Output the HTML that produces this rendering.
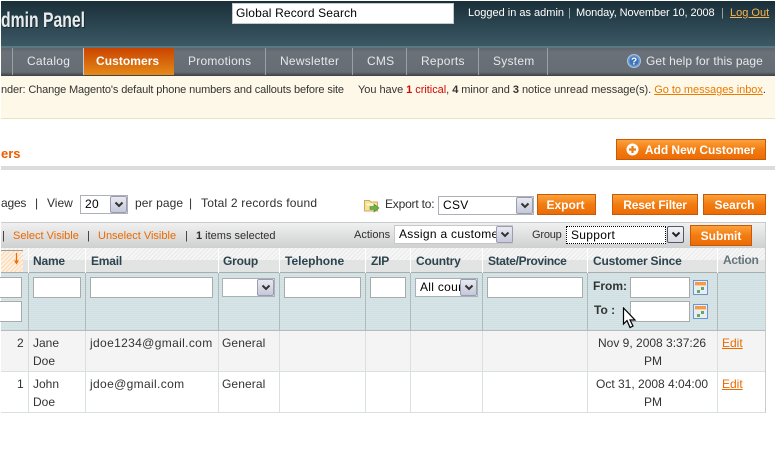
<!DOCTYPE html>
<html><head><meta charset="utf-8"><style>
html,body{margin:0;padding:0;background:#fff}
#p{position:relative;width:776px;height:450px;overflow:hidden;font:12px/15px "Liberation Sans",sans-serif;color:#2f2f2f;background:#fff}
#p div,#p span.a,#p a.a,#p svg{position:absolute}
.t{position:absolute;white-space:nowrap}
.nav{position:absolute;top:47px;height:28px;line-height:29px;color:#e6e8ea;white-space:nowrap;letter-spacing:.25px}
.sep{position:absolute;top:48px;width:1px;height:27px;background:#9aa0a5}
.btn{position:absolute;box-sizing:border-box;border:1px solid #c8590b;background:linear-gradient(#fca13a,#f27c12 50%,#ec6c05);color:#fff;font-weight:bold;text-align:center;line-height:20px;white-space:nowrap}
.sel{position:absolute;box-sizing:border-box;border:1px solid #aeb0b8;background:#fff;color:#000;line-height:17px;padding-left:4px;font-size:12px;letter-spacing:.3px;white-space:nowrap;overflow:hidden}
.arr{position:absolute;box-sizing:border-box;border:1px solid #9a9db0;background:linear-gradient(#e8e9f2,#c5c8d8);border-radius:2px}
.arr svg{left:3px;top:4px}
.inp{position:absolute;box-sizing:border-box;border:1px solid #aaa;background:#fff;height:21px}
.th{position:absolute;top:254px;font-weight:bold;color:#2d444f;white-space:nowrap;font-size:12px;letter-spacing:-.2px}
.vl{position:absolute;width:1px}
.c{position:absolute;white-space:nowrap;color:#333;line-height:18px}
a{color:#eb5e00}
</style></head><body><div id="p">
<!-- header -->
<div style="left:1px;top:1px;width:774px;height:45px;background:linear-gradient(#1a2f38,#3b5965)"></div>
<div style="left:1px;top:46px;width:774px;height:2px;background:#5d7880"></div>
<div style="left:1px;top:48px;width:774px;height:28px;background:linear-gradient(#5e656d 0,#6a7178 4px,#666d74 24px,#3a3f44 28px)"></div>
<span class="t" style="left:1px;top:8px;font-size:21px;line-height:26px;font-weight:bold;color:#e9eced;transform:scaleX(.75);transform-origin:0 0;text-shadow:1px 1px 0 #14242b">dmin Panel</span>
<div style="left:232px;top:3px;width:222px;height:21px;box-sizing:border-box;border:1px solid #c6c9cb;background:#fff;color:#000;font-size:12px;letter-spacing:.15px;line-height:19px;padding-left:3px">Global Record Search</div>
<span class="t" style="left:468px;top:6px;color:#fff;font-size:11px">Logged in as admin</span>
<span class="t" style="left:568px;top:6px;color:#9fb0b6;font-size:11px">|</span>
<span class="t" style="left:576px;top:6px;color:#fff;font-size:11px;letter-spacing:-.1px">Monday, November 10, 2008</span>
<span class="t" style="left:721px;top:6px;color:#9fb0b6;font-size:11px">|</span>
<a class="t" href="#" style="left:730px;top:6px;color:#f9b24f;font-size:11px">Log Out</a>
<!-- nav -->
<div class="sep" style="left:12px"></div>
<div class="sep" style="left:83px;background:#c8ccd0"></div>
<div style="left:84px;top:48px;width:90px;height:27px;background:linear-gradient(#c94400,#e58a18)"></div>
<div class="sep" style="left:265px"></div><div class="sep" style="left:352px"></div><div class="sep" style="left:406px"></div><div class="sep" style="left:478px"></div><div class="sep" style="left:547px"></div>
<span class="nav" style="left:27px">Catalog</span>
<span class="nav" style="left:96px;color:#fff;font-weight:bold;letter-spacing:.05px">Customers</span>
<span class="nav" style="left:188px">Promotions</span>
<span class="nav" style="left:280px">Newsletter</span>
<span class="nav" style="left:367px">CMS</span>
<span class="nav" style="left:421px">Reports</span>
<span class="nav" style="left:493px">System</span>
<svg style="left:627px;top:54px" width="14" height="14" viewBox="0 0 14 14"><circle cx="7" cy="7" r="6.5" fill="#6f9bd0" stroke="#a9c4e4"/><circle cx="7" cy="7" r="4.6" fill="#3f74b8"/><text x="7" y="10.5" font-size="10" font-weight="bold" fill="#fff" text-anchor="middle" font-family="Liberation Sans">?</text></svg>
<span class="nav" style="left:646px;letter-spacing:.1px">Get help for this page</span>
<!-- notice -->
<div style="left:1px;top:76px;width:774px;height:42px;background:#fef8e8;border-bottom:1px solid #eee2be"></div>
<span class="t" style="left:1px;top:83px;font-size:11px;color:#333;letter-spacing:-.13px">nder: Change Magento's default phone numbers and callouts before site</span>
<span class="t" style="left:358px;top:83px;font-size:11px;color:#333;letter-spacing:-.04px">You have <b style="color:#d40707">1</b> <span style="color:#d40707">critical</span>, <b>4</b> minor and <b>3</b> notice unread message(s). <a href="#" style="color:#eb7a00">Go to messages inbox</a>.</span>
<!-- title -->
<span class="t" style="left:1px;top:145px;font-size:13px;line-height:17px;font-weight:bold;color:#eb5e00">ers</span>
<div style="left:1px;top:166px;width:774px;height:4px;background:#dcdcdc"></div>
<div class="btn" style="left:616px;top:139px;width:150px;height:21px;padding-left:18px;letter-spacing:-.03px">Add New Customer</div>
<svg style="left:626px;top:143px" width="13" height="13" viewBox="0 0 13 13"><circle cx="6.5" cy="6.5" r="6" fill="#fff"/><path d="M6.5 3v7M3 6.500h7" stroke="#ee7a10" stroke-width="2.200"/></svg>
<!-- pager -->
<span class="t" style="left:1px;top:196px;letter-spacing:-.2px">ages</span>
<span class="t" style="left:35px;top:196px">|</span>
<span class="t" style="left:47px;top:196px">View</span>
<div class="sel" style="left:80px;top:195px;width:48px;height:19px">20</div>
<div class="arr" style="left:110px;top:196px;width:17px;height:17px"><svg width="10" height="8" viewBox="0 0 10 8"><path d="M1.500 1.500L5 5l3.500-3.500" fill="none" stroke="#333" stroke-width="2"/></svg></div>
<span class="t" style="left:135px;top:196px;letter-spacing:.1px">per page</span>
<span class="t" style="left:189px;top:196px">|</span>
<span class="t" style="left:201px;top:196px;letter-spacing:.2px">Total 2 records found</span>
<svg style="left:364px;top:198px" width="16" height="15" viewBox="0 0 16 15"><path d="M.5 2.500h5l1 1.500h7v9H.5z" fill="#f5e19a" stroke="#d3aa55"/><path d="M2.500 5.500h9v2h-9z" fill="#fff6d0"/><path d="M6 8.500h4V6l5 4-5 4v-2.500H6z" fill="#6fb04a" stroke="#4c8a30" stroke-width=".6"/></svg>
<span class="t" style="left:385px;top:197px;letter-spacing:-.2px">Export to:</span>
<div class="sel" style="left:438px;top:196px;width:96px;height:19px">CSV</div>
<div class="arr" style="left:516px;top:197px;width:17px;height:17px"><svg width="10" height="8" viewBox="0 0 10 8"><path d="M1.500 1.500L5 5l3.500-3.500" fill="none" stroke="#333" stroke-width="2"/></svg></div>
<div class="btn" style="left:537px;top:194px;width:59px;height:21px;padding-right:2px">Export</div>
<div class="btn" style="left:612px;top:194px;width:86px;height:21px;letter-spacing:-.15px">Reset Filter</div>
<div class="btn" style="left:703px;top:194px;width:63px;height:21px">Search</div>
<!-- massaction bar -->
<div style="left:1px;top:222px;width:765px;height:26px;box-sizing:border-box;border-top:1px solid #c8cccc;background:linear-gradient(#f0f0f0,#cfd0d0)"></div>
<span class="t" style="left:2px;top:229px;font-size:11px">|</span>
<span class="t" style="left:13px;top:229px;font-size:11px;color:#eb6a00">Select Visible</span>
<span class="t" style="left:87px;top:229px;font-size:11px">|</span>
<span class="t" style="left:98px;top:229px;font-size:11px;color:#eb6a00">Unselect Visible</span>
<span class="t" style="left:185px;top:229px;font-size:11px">|</span>
<span class="t" style="left:196px;top:229px;font-size:11px"><b>1</b> items selected</span>
<span class="t" style="left:354px;top:228px;font-size:11px">Actions</span>
<div class="sel" style="left:394px;top:225px;width:119px;height:19px;border-color:#c8c8cc">Assign a custome</div>
<div class="arr" style="left:496px;top:226px;width:17px;height:17px"><svg width="10" height="8" viewBox="0 0 10 8"><path d="M1.500 1.500L5 5l3.500-3.500" fill="none" stroke="#333" stroke-width="2"/></svg></div>
<span class="t" style="left:532px;top:228px;font-size:11px;letter-spacing:-.2px">Group</span>
<div class="sel" style="left:566px;top:226px;width:100px;height:18px;border:1px dotted #000;line-height:16px">Support</div>
<div class="arr" style="left:667px;top:226px;width:17px;height:17px;border-color:#556;background:linear-gradient(#f2f3f7,#d8dae4)"><svg width="10" height="8" viewBox="0 0 10 8"><path d="M1.500 1.500L5 5l3.500-3.500" fill="none" stroke="#222" stroke-width="2"/></svg></div>
<div class="btn" style="left:690px;top:225px;width:62px;height:21px">Submit</div>
<!-- grid header -->
<div style="left:1px;top:248px;width:765px;height:25px;background:repeating-linear-gradient(135deg,#e9e9e9 0 1px,#f6f6f6 1px 3px)"></div>
<div style="left:1px;top:260px;width:765px;height:12px;background:#e2e3e3"></div>
<div style="left:1px;top:250px;width:22px;height:22px;background:repeating-linear-gradient(135deg,#fbd9b4 0 1px,#fff0e0 1px 3px);border-top:1px solid #a99"></div>
<div style="left:1px;top:272px;width:765px;height:1px;background:#a8adad"></div>
<svg style="left:12px;top:252px" width="9" height="14" viewBox="0 0 9 14"><path d="M4.500 1v8" fill="none" stroke="#f26a00" stroke-width="1.200"/><path d="M2 8.500h5L4.500 12.500z" fill="#f26a00"/></svg>
<span class="th" style="left:33px">Name</span>
<span class="th" style="left:91px">Email</span>
<span class="th" style="left:223px">Group</span>
<span class="th" style="left:285px;letter-spacing:0">Telephone</span>
<span class="th" style="left:371px">ZIP</span>
<span class="th" style="left:416px">Country</span>
<span class="th" style="left:488px;letter-spacing:-.35px">State/Province</span>
<span class="th" style="left:593px">Customer Since</span>
<span class="th" style="left:723px;top:253px;color:#66757c;letter-spacing:-.3px">Action</span>
<!-- filter row -->
<div style="left:1px;top:273px;width:765px;height:57px;background-color:#d7e5e8;background-image:repeating-linear-gradient(0deg,#cfdfe2 0 1px,transparent 1px 2px)"></div>
<div style="left:1px;top:330px;width:765px;height:1px;background:#b6bcbc"></div>
<div class="inp" style="left:-2px;top:277px;width:24px"></div>
<div class="inp" style="left:-2px;top:301px;width:24px"></div>
<div class="inp" style="left:33px;top:277px;width:48px"></div>
<div class="inp" style="left:90px;top:277px;width:123px"></div>
<div class="sel" style="left:222px;top:278px;width:53px;height:19px"></div>
<div class="arr" style="left:257px;top:279px;width:17px;height:17px"><svg width="10" height="8" viewBox="0 0 10 8"><path d="M1.500 1.500L5 5l3.500-3.500" fill="none" stroke="#333" stroke-width="2"/></svg></div>
<div class="inp" style="left:284px;top:277px;width:77px"></div>
<div class="inp" style="left:370px;top:277px;width:36px"></div>
<div class="sel" style="left:415px;top:278px;width:63px;height:19px;padding-left:4px">All cour</div>
<div class="arr" style="left:460px;top:279px;width:17px;height:17px"><svg width="10" height="8" viewBox="0 0 10 8"><path d="M1.500 1.500L5 5l3.500-3.500" fill="none" stroke="#333" stroke-width="2"/></svg></div>
<div class="inp" style="left:487px;top:277px;width:96px"></div>
<span class="t" style="left:593px;top:279px;font-weight:bold;color:#333">From:</span>
<span class="t" style="left:594px;top:303px;font-weight:bold;color:#333">To :</span>
<div class="inp" style="left:630px;top:277px;width:60px"></div>
<div class="inp" style="left:630px;top:301px;width:60px"></div>
<svg style="left:693px;top:280px" width="15" height="15" viewBox="0 0 15 15"><rect x=".5" y=".5" width="14" height="14" fill="#e8eef5" stroke="#6f96c8"/><rect x="2" y="2" width="11" height="3" fill="#f59a4a"/><rect x="2" y="5" width="11" height="1" fill="#f8d0a0"/><rect x="4" y="10" width="3" height="3" fill="#6aa860"/><rect x="8" y="7" width="3" height="3" fill="#6aa860"/></svg>
<svg style="left:693px;top:304px" width="15" height="15" viewBox="0 0 15 15"><rect x=".5" y=".5" width="14" height="14" fill="#e8eef5" stroke="#6f96c8"/><rect x="2" y="2" width="11" height="3" fill="#f59a4a"/><rect x="2" y="5" width="11" height="1" fill="#f8d0a0"/><rect x="4" y="10" width="3" height="3" fill="#6aa860"/><rect x="8" y="7" width="3" height="3" fill="#6aa860"/></svg>
<!-- rows -->
<div style="left:1px;top:331px;width:765px;height:40px;background:#f4f4f4"></div>
<div style="left:1px;top:371px;width:765px;height:1px;background:#dadfdf"></div>
<div style="left:1px;top:412px;width:765px;height:1px;background:#dadfdf"></div>
<!-- vertical lines -->
<div class="vl" style="left:28px;top:248px;height:25px;background:#fff"></div><div class="vl" style="left:85px;top:248px;height:25px;background:#fff"></div><div class="vl" style="left:218px;top:248px;height:25px;background:#fff"></div><div class="vl" style="left:279px;top:248px;height:25px;background:#fff"></div><div class="vl" style="left:365px;top:248px;height:25px;background:#fff"></div><div class="vl" style="left:410px;top:248px;height:25px;background:#fff"></div><div class="vl" style="left:482px;top:248px;height:25px;background:#fff"></div><div class="vl" style="left:587px;top:248px;height:25px;background:#fff"></div><div class="vl" style="left:717px;top:248px;height:25px;background:#fff"></div>
<div class="vl" style="left:28px;top:273px;height:57px;background:#b2b9b9"></div><div class="vl" style="left:85px;top:273px;height:57px;background:#b2b9b9"></div><div class="vl" style="left:218px;top:273px;height:57px;background:#b2b9b9"></div><div class="vl" style="left:279px;top:273px;height:57px;background:#b2b9b9"></div><div class="vl" style="left:365px;top:273px;height:57px;background:#b2b9b9"></div><div class="vl" style="left:410px;top:273px;height:57px;background:#b2b9b9"></div><div class="vl" style="left:482px;top:273px;height:57px;background:#b2b9b9"></div><div class="vl" style="left:587px;top:273px;height:57px;background:#b2b9b9"></div><div class="vl" style="left:717px;top:273px;height:57px;background:#b2b9b9"></div>
<div class="vl" style="left:28px;top:331px;height:81px;background:#dadfdf"></div><div class="vl" style="left:85px;top:331px;height:81px;background:#dadfdf"></div><div class="vl" style="left:218px;top:331px;height:81px;background:#dadfdf"></div><div class="vl" style="left:279px;top:331px;height:81px;background:#dadfdf"></div><div class="vl" style="left:365px;top:331px;height:81px;background:#dadfdf"></div><div class="vl" style="left:410px;top:331px;height:81px;background:#dadfdf"></div><div class="vl" style="left:482px;top:331px;height:81px;background:#dadfdf"></div><div class="vl" style="left:587px;top:331px;height:81px;background:#dadfdf"></div><div class="vl" style="left:717px;top:331px;height:81px;background:#dadfdf"></div>
<div class="vl" style="left:765px;top:222px;height:191px;background:#c8cccc"></div>
<!-- row text -->
<span class="c" style="left:17px;top:334px">2</span>
<span class="c" style="left:33px;top:334px">Jane</span><span class="c" style="left:33px;top:352px">Doe</span>
<span class="c" style="left:90px;top:334px;letter-spacing:.35px">jdoe1234@gmail.com</span>
<span class="c" style="left:222px;top:334px;letter-spacing:.1px">General</span>
<span class="c" style="left:598px;top:334px">Nov 9, 2008 3:37:26</span><span class="c" style="left:644px;top:352px">PM</span>
<a class="c" href="#" style="left:722px;top:334px;color:#eb6a00">Edit</a>
<span class="c" style="left:17px;top:375px">1</span>
<span class="c" style="left:33px;top:375px">John</span><span class="c" style="left:33px;top:393px">Doe</span>
<span class="c" style="left:90px;top:375px;letter-spacing:.35px">jdoe@gmail.com</span>
<span class="c" style="left:222px;top:375px;letter-spacing:.1px">General</span>
<span class="c" style="left:596px;top:375px">Oct 31, 2008 4:04:00</span><span class="c" style="left:644px;top:393px">PM</span>
<a class="c" href="#" style="left:722px;top:375px;color:#eb6a00">Edit</a>
<!-- cursor -->
<svg style="left:622px;top:307px" width="15" height="22" viewBox="0 0 15 22"><path d="M1.500 1v16l3.500-3.500L8 20.500l3-1.500-3-6h5z" fill="#fff" stroke="#000" stroke-width="1.200"/></svg>
</div></body></html>
